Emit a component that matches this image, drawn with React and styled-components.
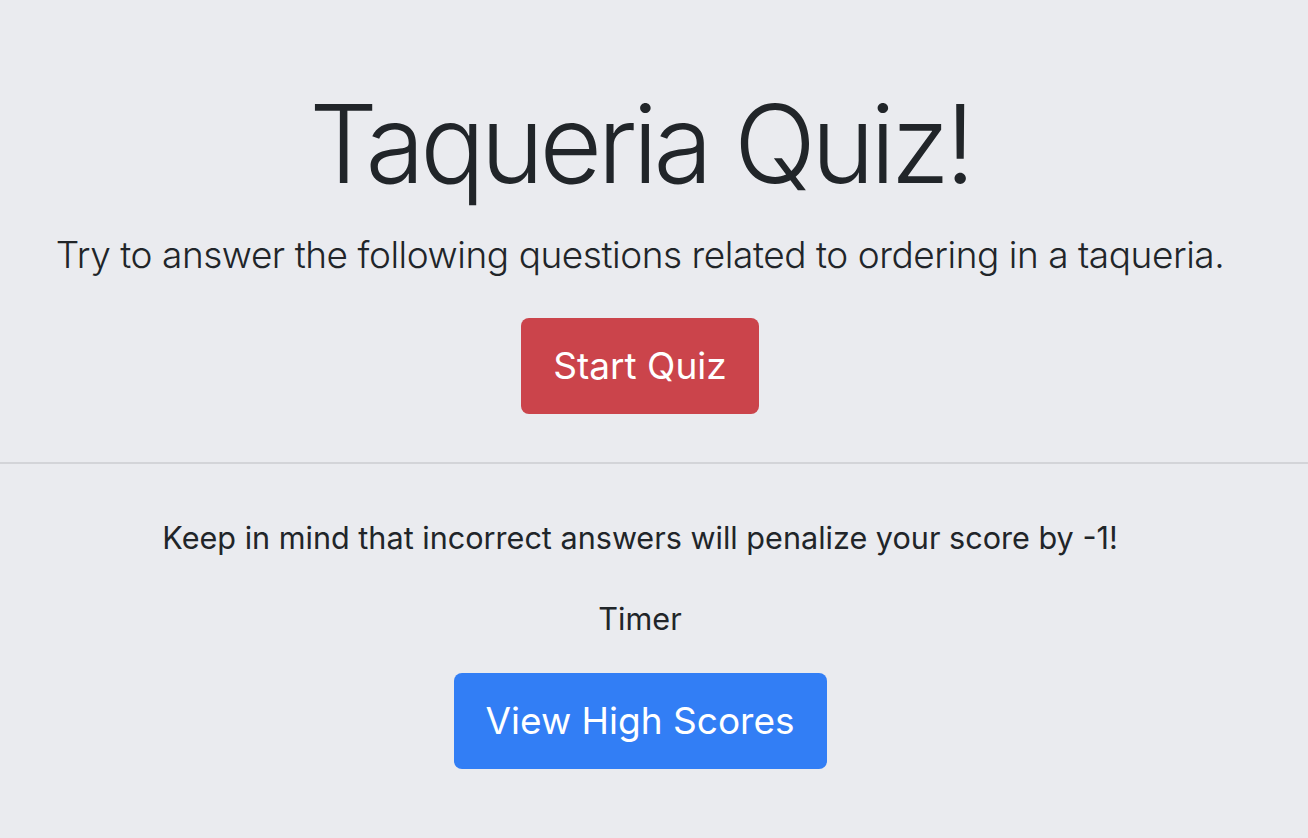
import React from 'react';
import styled, { createGlobalStyle } from 'styled-components';

const GlobalStyle = createGlobalStyle`
  html, body {
    margin: 0;
    padding: 0;
    background: #eaebef;
  }
  body {
    font-family: Inter, "Noto Sans", "Liberation Sans", sans-serif;
    color: #212529;
  }
`;

const Page = styled.main`
  display: flex;
  flex-direction: column;
  min-height: 838px;
  background: #eaebef;
`;

const Hero = styled.section`
  display: flex;
  flex-direction: column;
  align-items: center;
  padding: 79px 28px 48px 0;
`;

const Title = styled.h1`
  margin: 0;
  font-size: 108px;
  font-weight: 300;
  line-height: 1.2;
  letter-spacing: -4.6px;
`;

const Lead = styled.p`
  margin: 18px 0 0;
  font-size: 37px;
  font-weight: 300;
  line-height: 1.5;
  letter-spacing: -0.45px;
`;

const Button = styled.button`
  margin-top: ${p => p.$top || 0}px;
  padding: 20px 32px;
  border: none;
  border-radius: 8px;
  background: ${p => (p.$variant === 'primary' ? '#327ef5' : '#cb444b')};
  color: #fff;
  font-family: inherit;
  font-size: 37px;
  font-weight: 400;
  line-height: 1.5;
  cursor: pointer;
`;

const Divider = styled.hr`
  margin: 0;
  border: none;
  border-top: 2px solid #d3d4d8;
`;

const Info = styled.section`
  display: flex;
  flex-direction: column;
  align-items: center;
  padding: 51px 28px 0 0;
`;

const Note = styled.p`
  margin: ${p => p.$top || 0}px 0 0;
  font-size: 30.6px;
  line-height: 1.5;
`;

export default function App() {
  return (
    <Page>
      <GlobalStyle />
      <Hero>
        <Title>Taqueria Quiz!</Title>
        <Lead>Try to answer the following questions related to ordering in a taqueria.</Lead>
        <Button $top={36}>Start Quiz</Button>
      </Hero>
      <Divider />
      <Info>
        <Note>Keep in mind that incorrect answers will penalize your score by -1!</Note>
        <Note $top={36}>Timer</Note>
        <Button $variant="primary" $top={31}>View High Scores</Button>
      </Info>
    </Page>
  );
}
